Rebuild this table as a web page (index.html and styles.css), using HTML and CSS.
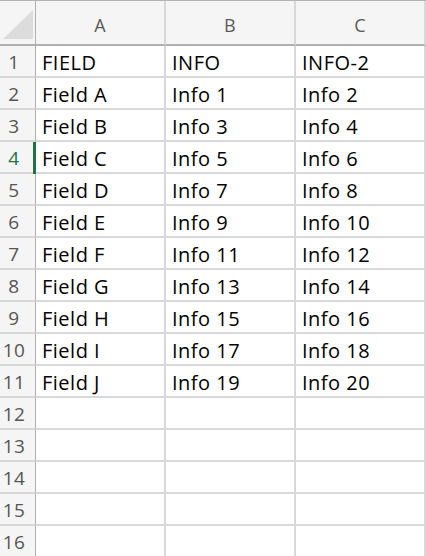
FILE: index.html
```html
<!DOCTYPE html>
<html>
<head>
<meta charset="utf-8">
<link rel="stylesheet" href="styles.css">
</head>
<body>
<div class="sheet">
  <div class="corner"><svg class="tri" width="30" height="29" viewBox="0 0 30 29"><polygon points="30,0 30,29 0,29" fill="#dcdcdc"/></svg></div>
  <div class="colhead">A</div>
  <div class="colhead">B</div>
  <div class="colhead">C</div>

  <div class="rowhead">1</div><div class="cell">FIELD</div><div class="cell">INFO</div><div class="cell">INFO-2</div>
  <div class="rowhead">2</div><div class="cell">Field A</div><div class="cell">Info 1</div><div class="cell">Info 2</div>
  <div class="rowhead">3</div><div class="cell">Field B</div><div class="cell">Info 3</div><div class="cell">Info 4</div>
  <div class="rowhead active">4</div><div class="cell">Field C</div><div class="cell">Info 5</div><div class="cell">Info 6</div>
  <div class="rowhead">5</div><div class="cell">Field D</div><div class="cell">Info 7</div><div class="cell">Info 8</div>
  <div class="rowhead">6</div><div class="cell">Field E</div><div class="cell">Info 9</div><div class="cell">Info 10</div>
  <div class="rowhead">7</div><div class="cell">Field F</div><div class="cell">Info 11</div><div class="cell">Info 12</div>
  <div class="rowhead">8</div><div class="cell">Field G</div><div class="cell">Info 13</div><div class="cell">Info 14</div>
  <div class="rowhead">9</div><div class="cell">Field H</div><div class="cell">Info 15</div><div class="cell">Info 16</div>
  <div class="rowhead">10</div><div class="cell">Field I</div><div class="cell">Info 17</div><div class="cell">Info 18</div>
  <div class="rowhead">11</div><div class="cell">Field J</div><div class="cell">Info 19</div><div class="cell">Info 20</div>
  <div class="rowhead">12</div><div class="cell"></div><div class="cell"></div><div class="cell"></div>
  <div class="rowhead">13</div><div class="cell"></div><div class="cell"></div><div class="cell"></div>
  <div class="rowhead">14</div><div class="cell"></div><div class="cell"></div><div class="cell"></div>
  <div class="rowhead">15</div><div class="cell"></div><div class="cell"></div><div class="cell"></div>
  <div class="rowhead">16</div><div class="cell"></div><div class="cell"></div><div class="cell"></div>
</div>
</body>
</html>
```

FILE: styles.css
```css
html, body {
  margin: 0;
  padding: 0;
  background: #ffffff;
  overflow: hidden;
}
.sheet {
  display: grid;
  grid-template-columns: 36px 130px 130px 130px;
  grid-auto-rows: 32px;
  grid-template-rows: 45px;
  border-top: 1px solid #b4b4b4;
  font-family: "Open Sans", "Liberation Sans", sans-serif;
  font-size: 20px;
  color: #000;
  width: 426px;
}
.corner {
  background: #f5f5f5;
  border-right: 1px solid #b0b0b0;
  border-bottom: 2px solid #b0b0b0;
  box-sizing: border-box;
  position: relative;
}
.tri {
  position: absolute;
  left: 3px;
  top: 9px;
}
.colhead {
  background: #f5f5f5;
  border-right: 2px solid #d8d8d8;
  border-bottom: 2px solid #b0b0b0;
  box-sizing: border-box;
  display: flex;
  align-items: center;
  justify-content: center;
  padding-top: 5px;
  color: #5a5a5a;
  font-size: 18px;
  letter-spacing: 0.3px;
}
.rowhead {
  background: #f5f5f5;
  border-right: 1px solid #b0b0b0;
  border-bottom: 2px solid #d8d8d8;
  box-sizing: border-box;
  display: flex;
  align-items: center;
  justify-content: center;
  padding-right: 7px;
  padding-top: 2px;
  color: #555;
  font-size: 19px;
  letter-spacing: 0.5px;
  position: relative;
}
.rowhead.active {
  color: #217346;
}
.rowhead.active::after {
  content: "";
  position: absolute;
  right: -1px;
  top: 0;
  bottom: -2px;
  width: 3px;
  background: #217346;
}
.cell {
  border-right: 2px solid #d8d8d8;
  border-bottom: 2px solid #d8d8d8;
  box-sizing: border-box;
  display: flex;
  align-items: center;
  padding-left: 6px;
  padding-top: 2px;
  white-space: nowrap;
  letter-spacing: 0.5px;
}
```
